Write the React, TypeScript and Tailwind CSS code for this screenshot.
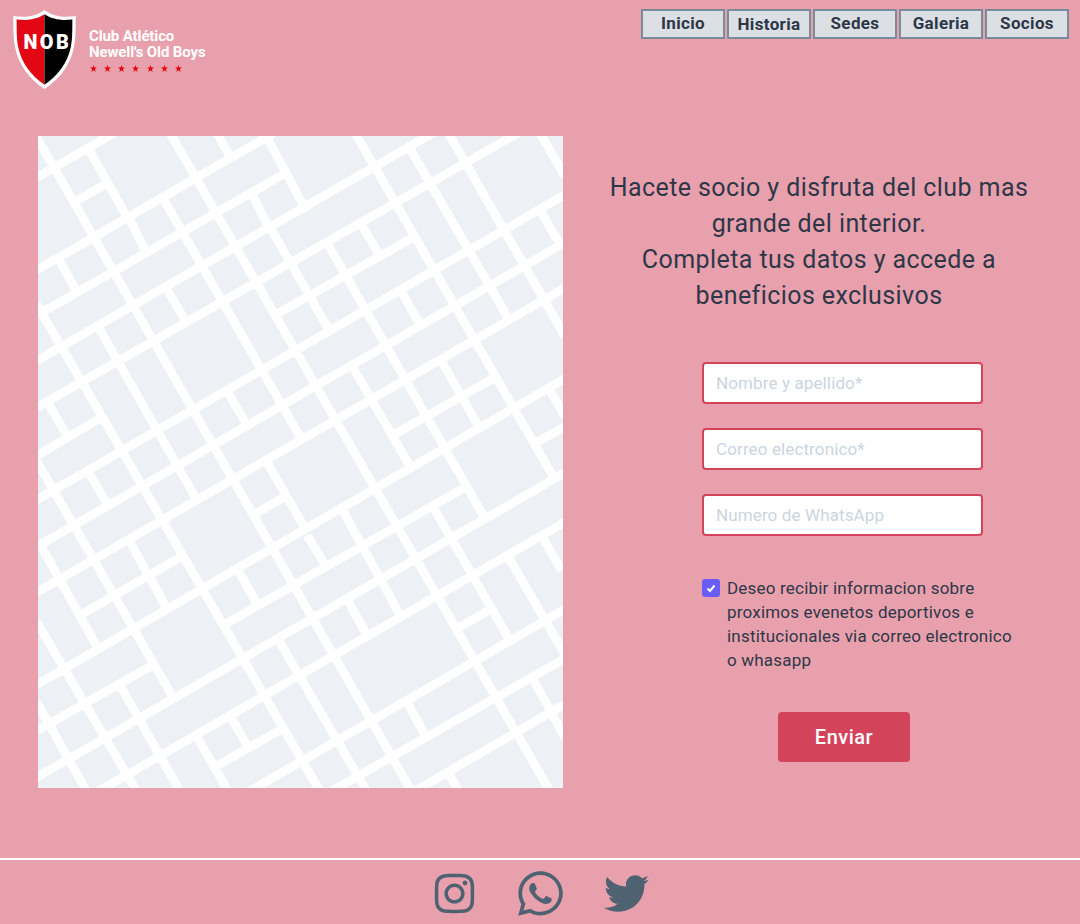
import { FaInstagram, FaWhatsapp, FaTwitter } from "react-icons/fa";

const roads: number[][] = [
  [24,140,250,10],[24,418,730,10],[40,545,765,130],[24,690,1225,0],[24,830,1480,0],[24,975,205,868],
  [735,555,1145,325],[24,1108,1600,197],[24,1248,1600,340],[24,1385,1600,476],[24,1662,1600,748],
  [24,1800,360,1610],[24,1940,1600,1031],[200,1987,1600,1179],[555,1910,755,1798],[665,1980,1600,1440],
  [910,1980,1600,1588],[1160,1980,1600,1725],[1090,915,1390,745],[160,1450,450,1282],[135,215,222,165],
  [678,1150,762,1102],[1282,1495,1375,1442],[1515,940,1600,892],[590,1480,1300,1075],
  [10,5,1140,1975],[24,530,865,1975],[180,65,285,250],[298,265,345,360],[90,395,137,478],[405,215,810,920],
  [210,600,495,1100],[415,485,465,570],[425,18,1555,1975],[565,18,595,70],[715,30,825,235],[670,200,715,290],
  [725,300,895,597],[970,0,1570,1040],[1145,65,1432,560],[1260,18,1600,610],[1535,18,1600,130],[1535,250,1585,335],
  [1565,790,1600,850],[895,345,1360,1157],[998,290,1045,370],[1120,495,1165,575],[970,715,1142,1012],[1240,703,1345,888],
  [598,795,648,880],[60,830,110,915],[24,1000,425,1695],[34,1250,200,1548],[24,1483,315,1975],[24,1724,165,1975],
  [275,1675,445,1975],[302,1240,408,1430],[500,1820,590,1975],[603,1762,650,1845],[630,1330,680,1420],[750,1538,1005,1975],
  [710,995,825,1195],[180,1035,228,1115],[837,1225,885,1305],[943,1150,1110,1455],[958,1420,1005,1505],[1210,1132,1437,1527],
  [1435,1280,1600,1565],[1537,1222,1590,1312],[1510,1650,1560,1738],[1570,1760,1600,1815],[1138,1730,1185,1815],[1257,1932,1282,1975],
];

function extended(r: number[]) {
  const dx = r[2] - r[0];
  const dy = r[3] - r[1];
  const len = Math.hypot(dx, dy);
  const ux = (dx / len) * 11;
  const uy = (dy / len) * 11;
  return { x1: r[0] - ux, y1: r[1] - uy, x2: r[2] + ux, y2: r[3] + uy };
}

const nav = ["Inicio", "Historia", "Sedes", "Galeria", "Socios"];
const stars = [0, 1, 2, 3, 4, 5, 6];

function Logo() {
  return (
    <div className="flex items-start pl-[12px] pt-[9px]">
      <svg width="65" height="81" viewBox="36 27 196 244">
        <path d="M134 30 C120 40 105 48 80 50 C68 50 52 50 40 48 C40 90 40 120 46 145 C56 195 90 240 134 268 C178 240 212 195 222 145 C228 120 228 90 228 48 C216 50 200 50 188 50 C163 48 148 40 134 30 Z" fill="#ffffff" />
        <path d="M134 43 C120 52 105 58 80 60 C70 60 60 60 50 58 C50 95 50 120 55 143 C65 190 95 230 134 255 Z" fill="#e30613" />
        <path d="M134 43 C148 52 163 58 188 60 C198 60 208 60 218 58 C218 95 218 120 213 143 C203 190 173 230 134 255 Z" fill="#000000" />
        <text x="71" y="149" fill="#ffffff" fontFamily="Roboto, sans-serif" fontWeight="900" fontSize="60" letterSpacing="7">NOB</text>
      </svg>
      <div className="ml-[12px] pt-[19px] text-white">
        <div className="text-[15px] leading-[16px] font-bold tracking-[-0.12px]">Club Atlético</div>
        <div className="text-[15px] leading-[16px] font-bold tracking-[-0.12px]">Newell's Old Boys</div>
        <div className="mt-[5px] flex gap-[7.17px] pl-[1px]">
          {stars.map((s) => (
            <svg key={s} width="7" height="7" viewBox="0 0 10 10">
              <polygon points="5,0 6.3,3.6 10,3.6 7,6 8.1,10 5,7.6 1.9,10 3,6 0,3.6 3.7,3.6" fill="#e30613" />
            </svg>
          ))}
        </div>
      </div>
    </div>
  );
}

function Field({ placeholder }: { placeholder: string }) {
  return (
    <input
      placeholder={placeholder}
      className="block h-[42px] w-[281px] rounded border-2 border-[#d34359] bg-white px-3 text-[17px] text-[#2d3748] tracking-[0.12px] placeholder:text-[#cbd5e0]"
    />
  );
}

export default function App() {
  return (
    <div className="[font-family:Roboto,sans-serif] h-[924px] w-[1080px] overflow-hidden bg-[#e9a0ad] text-[#2d3748]">
      <header className="flex h-[136px] items-start justify-between">
        <Logo />
        <nav className="mr-[11px] mt-[9px] flex items-start gap-[2px]">
          {nav.map((n) => (
            <a
              key={n}
              className={`flex h-[30px] w-[84px] items-start justify-center border-2 border-[#7a8c9c] bg-[#dce0e4] text-[17px] font-bold leading-[24px] text-[#2d3748] tracking-[0.35px] ${n === "Historia" ? "pt-[1px]" : "pt-0"}`}
            >
              {n}
            </a>
          ))}
        </nav>
      </header>
      <main className="flex h-[722px] items-start pl-[38px]">
        <div className="h-[652px] w-[525px] bg-[#edf0f5]">
          <svg width="525" height="652" viewBox="24 18 1575 1956" className="block">
            {roads.map((r, i) => (
              <line key={i} {...extended(r)} stroke="#ffffff" strokeWidth="26" />
            ))}
          </svg>
        </div>
        <div className="pl-[41px]">
          <h2 className="mt-[34px] w-[430px] whitespace-nowrap text-center text-[25px] font-normal leading-[36px] tracking-[0.42px]">
            Hacete socio y disfruta del club mas
            <br />
            grande del interior.
            <br />
            Completa tus datos y accede a
            <br />
            beneficios exclusivos
          </h2>
          <form className="ml-[98px] mt-[48px] w-[320px]">
            <div className="flex flex-col gap-[24px]">
              <Field placeholder="Nombre y apellido*" />
              <Field placeholder="Correo electronico*" />
              <Field placeholder="Numero de WhatsApp" />
            </div>
            <div className="mt-[40px] flex items-start gap-[7px]">
              <span className="mt-[3px] flex h-[18px] w-[18px] shrink-0 items-center justify-center rounded-[3px] bg-[#6a5cf6]">
                <svg width="12" height="12" viewBox="0 0 12 12" fill="none">
                  <path d="M2.5 6.5 L5 9 L9.5 3.5" stroke="#ffffff" strokeWidth="2" />
                </svg>
              </span>
              <p className="w-[295px] text-[17px] leading-[24px] tracking-[0.2px]">
                Deseo recibir informacion sobre
                <br />
                proximos evenetos deportivos e
                <br />
                institucionales via correo electronico
                <br />o whasapp
              </p>
            </div>
            <button
              type="button"
              className="ml-[76px] mt-[40px] block h-[50px] w-[132px] rounded bg-[#d3435a] text-[20px] font-medium text-white tracking-[0.5px]"
            >
              Enviar
            </button>
          </form>
        </div>
      </main>
      <footer className="flex h-[66px] items-center justify-center gap-[38px] border-t-2 border-white pl-[1px] pt-[2px] text-[#4f6272]">
        <FaInstagram size={45} />
        <FaWhatsapp size={51} />
        <FaTwitter size={45} />
      </footer>
    </div>
  );
}
